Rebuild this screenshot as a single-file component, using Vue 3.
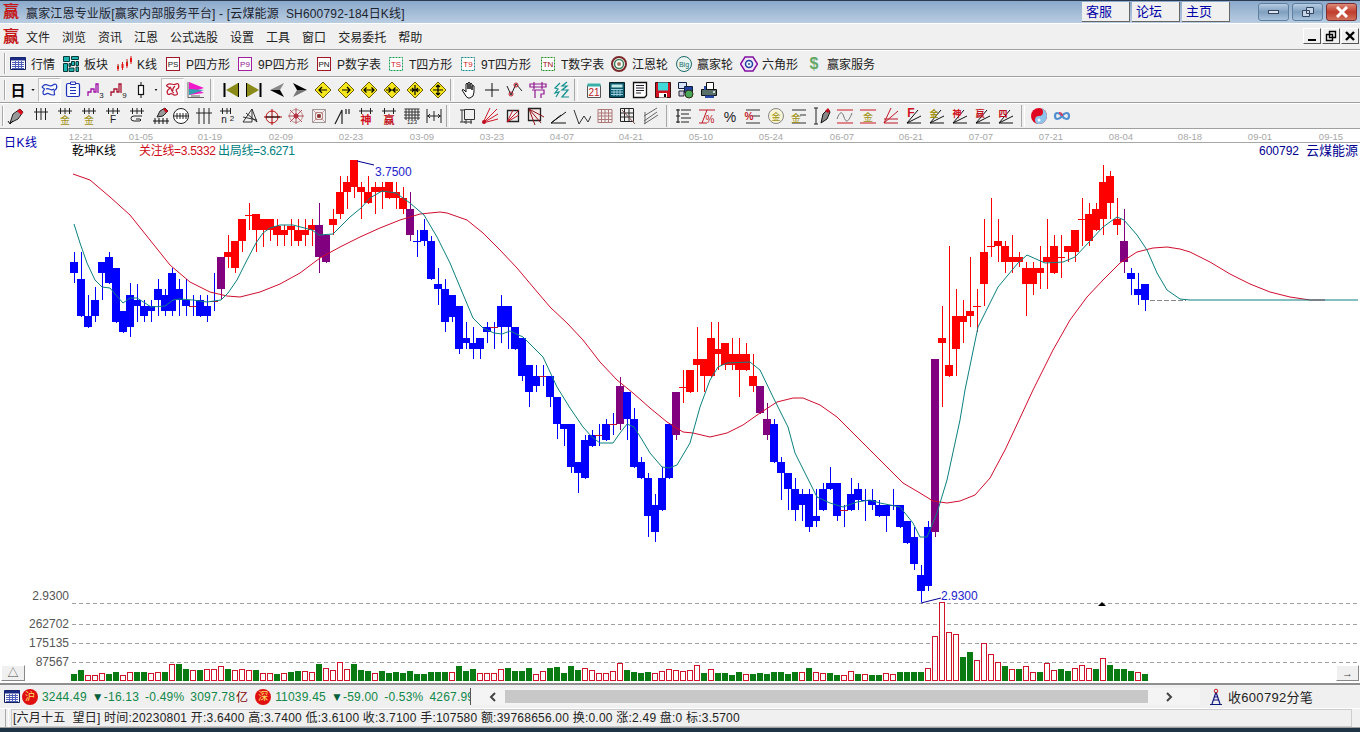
<template>
  <div class="app">
    <!-- 标题栏 -->
    <div class="titlebar">
      <span class="logo">赢</span>
      <span class="title">赢家江恩专业版[赢家内部服务平台] - [云煤能源&nbsp;&nbsp;SH600792-184日K线]</span>
      <div class="links">
        <a v-for="l in links" :key="l" class="link">{{ l }}</a>
      </div>
      <div class="win-btns">
        <div class="win-btn"><i class="min-bar"></i></div>
        <div class="win-btn">
          <svg width="14" height="12" viewBox="0 0 14 12"><path d="M5.5 1.5h7v6h-7zM1.5 4.5h7v6h-7z" fill="#c4d6e8" stroke="#33445c"/></svg>
        </div>
        <div class="win-btn close">
          <svg width="16" height="12" viewBox="0 0 16 12"><path d="M3 1l10 10M13 1L3 11" stroke="#fff" stroke-width="3"/></svg>
        </div>
      </div>
    </div>

    <!-- 菜单 -->
    <div class="menubar">
      <span class="logo">赢</span>
      <span v-for="m in menus" :key="m" class="menu-item">{{ m }}</span>
      <div class="mdi-btns">
        <div class="mdi-btn"><i class="mdi-min"></i></div>
        <div class="mdi-btn">
          <svg width="12" height="12" viewBox="0 0 12 12"><path d="M4.5 1.5h6v6h-6zM1.5 4.5h6v6h-6z" fill="#f0f0f0" stroke="#000" stroke-width="1.4"/></svg>
        </div>
        <div class="mdi-btn">
          <svg width="12" height="12" viewBox="0 0 12 12"><path d="M2 2l8 8M10 2l-8 8" stroke="#000" stroke-width="2.4"/></svg>
        </div>
      </div>
    </div>

    <!-- 工具栏一 -->
    <div class="toolbar tb1">
      <i class="grip"></i>
      <div v-for="t in textTools" :key="t.label" class="text-tool" :style="{ width: t.w + 'px' }">
        <svg class="ico" width="18" height="18" viewBox="0 0 18 18" v-html="icons[t.icon]"></svg>
        <span>{{ t.label }}</span>
      </div>
    </div>

    <!-- 工具栏二 -->
    <div class="toolbar tb2">
      <i class="grip"></i>
      <template v-for="(t, i) in tools2" :key="i">
        <i v-if="t.sep" class="sep" :style="{ marginLeft: (t.ml || 0) + 'px' }"></i>
        <div v-else class="tool" :class="{ pressed: t.on }" :style="{ width: (t.w || 23) + 'px', marginLeft: (t.ml || 0) + 'px' }">
          <svg width="18" height="18" viewBox="0 0 18 18" v-html="icons[t.n]"></svg>
        </div>
      </template>
    </div>

    <!-- 工具栏三 -->
    <div class="toolbar tb3">
      <i class="grip"></i>
      <template v-for="(t, i) in tools3" :key="i">
        <i v-if="t.sep" class="sep" :style="{ marginLeft: (t.ml || 0) + 'px' }"></i>
        <div v-else class="tool" :style="{ width: (t.w || 23) + 'px', marginLeft: (t.ml || 0) + 'px' }">
          <svg width="18" height="18" viewBox="0 0 18 18" v-html="icons[t.n]"></svg>
        </div>
      </template>
    </div>

    <!-- 日期轴 -->
    <svg class="dates" width="1360" height="14" viewBox="0 129 1360 14">
      <text v-for="d in dates" :key="d[0]" :x="d[1]" y="140" text-anchor="middle">{{ d[0] }}</text>
      <line x1="71" x2="1360" y1="142.5" y2="142.5" stroke="#a8a8a8" />
    </svg>

    <!-- K线主图 -->
    <div class="chart">
      <svg width="1360" height="540" viewBox="0 143 1360 540">
        <g class="grid">
          <line v-for="y in [603, 624, 643, 662]" :key="y" x1="72" x2="1360" :y1="y + 0.5" :y2="y + 0.5" />
        </g>
        <g shape-rendering="crispEdges">
          <template v-for="c in candles" :key="c.i">
            <rect :x="c.x" :y="c.wt" width="1" :height="c.wb - c.wt" :fill="c.wc" />
            <rect :x="c.x - 4" :y="c.bt" width="8" :height="c.bh" :fill="c.bc" />
          </template>
          <template v-for="v in volumes" :key="v.i">
            <rect v-if="v.g" :x="v.x" :y="v.y" width="6" :height="681 - v.y" fill="#0a7a12" />
            <rect v-else :x="v.x + 0.5" :y="v.y + 0.5" width="5" :height="680 - v.y" fill="#fff" stroke="#d0142c" />
          </template>
        </g>
        <polyline class="close-line" points="1150,300.5 1186,300.5" />
        <polyline class="red-line" :points="redLine" />
        <polyline class="teal-line" :points="tealLine" />
        <path d="M357 161l17 4M921 603l20-5" fill="none" stroke="#000090" />
        <path d="M1098 606h8l-4-4z" fill="#000" />

        <text class="t black" x="72" y="155">乾坤K线</text>
        <text class="t red tight" x="139" y="155">关注线=3.5332</text>
        <text class="t teal tight" x="218" y="155">出局线=3.6271</text>
        <text class="t navy" x="1259" y="155">600792</text>
        <text class="t navy big" x="1358" y="155" text-anchor="end">云煤能源</text>
        <text class="t price" x="375" y="176">3.7500</text>
        <text class="t price" x="941" y="600">2.9300</text>
        <text v-for="l in axisLabels" :key="l[0]" class="t axis" x="69" :y="l[1]" text-anchor="end">{{ l[0] }}</text>
      </svg>
      <div class="period">日K线</div>
      <div class="corner left">△</div>
      <div class="corner right">→</div>
    </div>

    <!-- 指数条 -->
    <div class="indexbar">
      <div class="index-scroll">
        <svg class="ico first" width="18" height="18" viewBox="0 0 18 18" v-html="icons.table"></svg>
        <span class="badge">沪</span>
        <span class="num n1">3244.49</span>
        <span class="num n2"><b>▼</b>-16.13</span>
        <span class="num n3">-0.49%</span>
        <span class="num n3">3097.78</span><span class="yi">亿</span>
        <span class="badge b2">深</span>
        <span class="num n1">11039.45</span>
        <span class="num n2"><b>▼</b>-59.00</span>
        <span class="num n3">-0.53%</span>
        <span class="num n3">4267.99</span>
      </div>
      <div class="scrollbar">
        <svg width="10" height="12" viewBox="0 0 10 12"><path d="M7 2L3 6l4 4" fill="none" stroke="#444" stroke-width="2"/></svg>
        <i class="thumb"></i>
        <svg class="next" width="10" height="12" viewBox="0 0 10 12"><path d="M3 2l4 4-4 4" fill="none" stroke="#444" stroke-width="2"/></svg>
      </div>
      <div class="tick-cell">
        <svg width="14" height="18" viewBox="0 0 14 18"><path d="M7 4L3 16M7 4l4 12M4 12h6M5 9h4M1 16.500h12" fill="none" stroke="#101880" stroke-width="1.200"/><circle cx="7" cy="3" r="1.800" fill="none" stroke="#c02020"/></svg>
        <span>收600792分笔</span>
      </div>
    </div>

    <!-- 状态栏 -->
    <div class="statusbar">
      <i class="status-grip"></i>
      <div class="status-text">[六月十五&nbsp;&nbsp;望日] 时间:20230801 开:3.6400 高:3.7400 低:3.6100 收:3.7100 手:107580 额:39768656.00 换:0.00 涨:2.49 盘:0 标:3.5700</div>
    </div>
    <div class="taskbar"></div>
  </div>
</template>

<script setup>
const links = ['客服', '论坛', '主页']
const menus = ['文件', '浏览', '资讯', '江恩', '公式选股', '设置', '工具', '窗口', '交易委托', '帮助']

// 小图标里的文字
const FONT = "Liberation Sans,Noto Sans CJK SC,sans-serif"
const txt = (s, x, y, size, fill, extra = '') =>
  `<text x="${x}" y="${y}" font-size="${size}" fill="${fill}" font-family="${FONT}" text-anchor="middle" ${extra}>${s}</text>`
const box = (label, border, color, dash = '') =>
  `<rect x="2.500" y="2.500" width="13" height="13" fill="#fff" stroke="${border}" ${dash}/>` + txt(label, 9, 12, 8, color)
const diamond = (d) =>
  `<path d="M9 1l8 8-8 8-8-8z" fill="#f6e61c" stroke="#6a5c00"/><path d="${d}" fill="none" stroke="#000" stroke-width="1.200"/>`
const comb = (extra = '') => `<path d="M2 5h14M4.500 1v12M9 1v12M13.500 1v12" stroke="#222" fill="none"/>` + extra
const fanLines = '<path d="M2 16h14M2 16L16 9M2 16L13 3" stroke="#111" fill="none"/>'
const fan = (s, c, size = 9) => fanLines + txt(s, 6, 10, size, c, 'font-weight="700"')
const pen = '<path d="M3 16l3-9 7-5 3 3-5 7z" fill="#999" stroke="#222"/><path d="M10 4l3-2 3 3-2 3z" fill="#e01020"/><path d="M1 14l2 3 3-3" fill="none" stroke="#111"/>'

const icons = {
  table: '<path d="M1.500 2.500h15v12h-15z" fill="#fff" stroke="#10205c"/><path d="M1.500 2.500h15v3h-15z" fill="#1c2c84"/><path d="M3 7.500h12M3 9.500h12M3 11.500h12M3 13.500h12M6.500 6v8M9.500 6v8M12.500 6v8" stroke="#5060b8"/>',
  sector: '<path d="M1.500 1.500h6v5h-6zM9.500 1.500h7v3h-7zM9.500 6.500h3v4h-3zM14 6.500h2.500v4H14zM1.500 8.500h4v8h-4zM7 8.500h1.500v3H7zM7 13h5v3.500H7zM14 12h2.500v4.500H14z" fill="#1cb4b0" stroke="#083838"/>',
  kline: '<path d="M3 9v7M7.500 7v8M12 4v9M16 1v8" stroke="#e01818" fill="none"/><path d="M2 11h2v3H2zM6.500 9h2v4h-2zM11 7h2v4h-2zM15 3h2v4h-2z" fill="#e01818"/><path d="M3 11h1M12 7h1" stroke="#208020"/>',
  ps: box('PS', '#a01828', '#222'),
  p9: box('P9', '#a020a0', '#901090'),
  pn: box('PN', '#a01828', '#111'),
  ts: box('TS', '#10a050', '#d01828', 'stroke-dasharray="2 1"'),
  t9: box('T9', '#108888', '#d01828', 'stroke-dasharray="2 1"'),
  tn: box('TN', '#209020', '#a01010', 'stroke-dasharray="2 1"'),
  wheel: '<circle cx="9" cy="9" r="7" fill="#fff" stroke="#7a2828" stroke-width="2"/><circle cx="9" cy="9" r="4.500" fill="#fff" stroke="#3c8060" stroke-width="1.500"/><circle cx="9" cy="9" r="2" fill="#a87858"/>',
  big: '<circle cx="9" cy="9" r="7.500" fill="#e8f4f0" stroke="#206868"/>' + txt('Big', 9, 12, 7, '#206868'),
  hexa: '<path d="M5 2h8l4.500 7L13 16H5L.5 9z" fill="#f4e8f8" stroke="#8010a0" stroke-width="1.500"/><circle cx="9" cy="9" r="3.500" fill="#e8f0ff" stroke="#2040a0" stroke-width="1.500"/><circle cx="9" cy="9" r="1" fill="#307080"/>',
  dollar: txt('$', 9, 14, 16, '#66a868', 'font-weight="700"'),

  day: txt('日', 9, 15, 15, '#000', 'font-weight="700"'),
  caret: '<path d="M6 7h6l-3 4z" fill="#111"/>',
  tangleB: '<path d="M2 5c4-4 6 2 10-1s5 3 2 5 2 5-2 5-4-3-7-1-4-2-2-4-4-2-1-4zM5 8c3-2 5 3 8 0" fill="none" stroke="#2038c0" stroke-width="1.200"/>',
  clip: '<path d="M4 2.500h10q1.500 0 1.500 1.500v10q0 1.500-1.500 1.500H4q-1.500 0-1.500-1.500V4q0-1.500 1.500-1.500z" fill="#f4f8ff" stroke="#2030b8" stroke-width="1.200"/><path d="M6 6.500h6M6 9.500h6M6 12.500h6" stroke="#2030b8"/><path d="M6.500 1h5v2.500h-5z" fill="#fff" stroke="#2030b8"/>',
  wave3: '<path d="M1 15v-4h3V8h3v3h2V3h2v9" fill="none" stroke="#a010a8" stroke-width="1.300"/>' + txt('3', 14.500, 17, 8, '#222'),
  wave9: '<path d="M1 15v-4h3V8h3v3h2V3h2v9" fill="none" stroke="#a81030" stroke-width="1.300"/>' + txt('9', 14.500, 17, 8, '#222'),
  candle: '<path d="M9 1v16" stroke="#111"/><rect x="6.500" y="4.500" width="5" height="9" fill="#fff" stroke="#111" stroke-width="1.200"/>',
  tangleR: '<path d="M3 4c4-3 6 1 9-1s4 4 1 5 3 5-1 6-3-3-6-1-4-3-1-5-4-2-2-4zM6 6c2 2 1 5 4 6M11 5c-2 2-3 3-2 5" fill="none" stroke="#c01830" stroke-width="1.200"/>',
  flag: '<path d="M2 1l15 6-6 2 6 3-15 2z" fill="#f018c8"/><path d="M2 8l15 1-15 5z" fill="#30a0b0"/><path d="M1 1v16M1 16.500h16M4 15h9" stroke="#666" fill="none"/>',
  first: '<path d="M2.500 2v14" stroke="#000" stroke-width="2"/><path d="M4 9l12-7v14z" fill="#8a8a18"/><path d="M16.500 2v14" stroke="#000"/>',
  last: '<path d="M15.500 2v14" stroke="#000" stroke-width="2"/><path d="M14 9L2 2v14z" fill="#8a8a18"/><path d="M1.500 2v14" stroke="#000"/>',
  prev: '<path d="M2 9l14-7-4 7z" fill="#888"/><path d="M2 9l14 7-4-7z" fill="#000"/>',
  next: '<path d="M16 9L2 2l4 7z" fill="#000"/><path d="M16 9L2 16l4-7z" fill="#777"/>',
  dLeft: diamond('M13 9H5M8 6L5 9l3 3'),
  dRight: diamond('M5 9h8M10 6l3 3-3 3'),
  dBoth: diamond('M4 9h10M6.500 6.500L4 9l2.500 2.500M11.500 6.500L14 9l-2.500 2.500'),
  dIn: diamond('M3 9h12M5.500 6.500L8 9l-2.500 2.500M12.500 6.500L10 9l2.500 2.500'),
  dFour: diamond('M4 9h10M9 4v10M6 7l2 2-2 2M12 7l-2 2 2 2'),
  dOut: diamond('M4 9h10M9 4v10M7 6l2-2 2 2M7 12l2 2 2-2'),
  hand: '<path d="M6 9V3q1-1.500 2 0v5V2q1-1.500 2 0v6V3q1-1.500 2 0v6V5q1-1 2 0v6q0 5-4 6H8q-2-1-4-5L2 9q1-1 2 0l2 2z" fill="#fff" stroke="#111"/>',
  cross: '<path d="M9 2v14M2 9h14" stroke="#111" fill="none"/>',
  vee: '<path d="M1 5l4 9 5-11 6 7" fill="none" stroke="#222"/><circle cx="5" cy="13" r="2" fill="none" stroke="#c01828"/><circle cx="10" cy="4" r="2" fill="none" stroke="#c01828"/>',
  jie: '<path d="M1 3h16v3H1zM5 1v7M13 1v7M3 9h12v4h-3v4M6 9v8" fill="none" stroke="#901890" stroke-width="1.200"/>',
  bird: '<path d="M8 2L3 7l3 1-3 4 4-1-3 5M15 1l-5 4h5l-5 4h6l-6 7h7" fill="none" stroke="#109090" stroke-width="1.200"/>',
  cal: '<path d="M2.500 4.500h13v12h-13z" fill="#f8f8f8" stroke="#555"/><path d="M2.500 2.500h13v3h-13z" fill="#38b0a8"/>' + txt('21', 9, 15, 10, '#c01828'),
  calc: '<path d="M1.500 1.500h15v15h-15z" fill="#0c5868" stroke="#072028"/><path d="M3.500 3.500h11v3h-11z" fill="#c0e8e8"/><path d="M3 8.500h12M3 11h12M3 13.500h12M6 8v7M9 8v7M12 8v7" stroke="#9cd"/>',
  note: '<path d="M2.500 1.500h13v13l-2 2h-11z" fill="#fff" stroke="#111" stroke-width="1.300"/><path d="M5 4.500h8M5 7h8M5 9.500h8M5 12h5" stroke="#223"/>',
  disk: '<path d="M1.500 1.500h15v15h-15z" fill="#d01020" stroke="#401010"/><path d="M4 1.500h10v8H4z" fill="#40d8d8"/><path d="M5 12h8v4.500H5z" fill="#fff"/><path d="M10 13h2v3h-2z" fill="#000"/>',
  network: '<path d="M1.500 1.500h8v6h-8z" fill="#d8e4f8" stroke="#102040"/><path d="M7.500 5.500h8v6h-8z" fill="#2040a0" stroke="#102040"/><circle cx="12" cy="13" r="4" fill="#48a858" stroke="#302818"/><path d="M2 10h5v5H2z" fill="#ccd" stroke="#223"/>',
  printer: '<path d="M6.500 1.500h7v7h-7z" fill="#fff" stroke="#111"/><path d="M1.500 8.500h15v6h-15z" fill="#587068" stroke="#111"/><path d="M4 5h2v4H4zM5 14.500h9v2.500H5z" fill="#2848a8"/><circle cx="14" cy="11" r="1" fill="#fff"/>',

  pen,
  comb: comb(),
  combGold: '<path d="M2 4h14M4.500 1v6M9 1v6M13.500 1v6" stroke="#222" fill="none"/>' + txt('金', 9, 17, 10, '#a09010'),
  combF: '<path d="M2 4h14M4.500 1v6M9 1v6M13.500 1v6" stroke="#222" fill="none"/>' + txt('F', 9, 16, 10, '#222'),
  combSwirl: '<path d="M2 4h14M4.500 1v6M9 1v6M13.500 1v6M14 9H6q-3 0-3 2.500T6 14h6q2-1 0-2H8" stroke="#222" fill="none"/>',
  penComb: '<path d="M5 10l3-6 5-3 3 3-5 5z" fill="#999" stroke="#222"/><path d="M11 2l2-1 3 3-2 2z" fill="#d01020"/><path d="M1 14h16M3 11v6M7 11v6M11 11v6M15 11v6" stroke="#111" fill="none"/>',
  ringComb: '<circle cx="9" cy="9" r="7.500" fill="#fff" stroke="#222"/><path d="M2 9h14M5 6v6M8 6v6M11 6v6M14 6v6" stroke="#222"/>',
  comb2: '<path d="M1 6h16M4 1v16M9 1v16M14 1v16" stroke="#222" fill="none"/>',
  combN: '<path d="M2 4h11M4.500 1v6M9 1v6M12.500 1v6" stroke="#222" fill="none"/>' + txt('n', 6, 16, 10, '#222') + txt('2', 14, 14, 8, '#222'),
  tri: '<path d="M2 15l9-13v13zM11 2l5 13M2 10l14 3M5 6l11 9" fill="none" stroke="#333"/>',
  target: '<circle cx="8" cy="10" r="6" fill="none" stroke="#c01010"/><path d="M0 10h18M8 2v16" stroke="#a00"/><path d="M2 10h14" stroke="#111"/>',
  star: '<circle cx="9" cy="9" r="6.500" fill="none" stroke="#c09090"/><path d="M1 9h16M9 1v16M3 3l12 12M15 3L3 15" stroke="#b85060"/><circle cx="9" cy="9" r="2.500" fill="#b03040"/>',
  square: '<path d="M2.500 2.500h13v13h-13z" fill="#f4eeee" stroke="#999"/><path d="M5.500 5.500h7v7h-7z" fill="none" stroke="#b88"/><path d="M2 2l14 14M16 2L2 16" stroke="#c8a0a0"/><circle cx="9" cy="9" r="2" fill="#883030"/>',
  ticks: '<path d="M1 17L8 3v14M8 3v0M12 2v5M15 2v5" fill="none" stroke="#222" stroke-width="1.200"/>',
  combShen: '<path d="M2 4h14M4.500 1v6M13.500 1v6" stroke="#222" fill="none"/>' + txt('神', 9, 17, 11, '#d01020', 'font-weight="700"'),
  combYing: '<path d="M2 4h14M4.500 1v6M13.500 1v6" stroke="#222" fill="none"/>' + txt('赢', 9, 17, 11, '#c01020', 'font-weight="700"'),
  combNum: '<path d="M1.500 2h15M3 2v14M6 2v14M9 2v14M12 2v14M15 2v14M1 5h16M1 8h16M1 11h16" stroke="#333" fill="none"/><path d="M2 13h14v4H2z" fill="#f0f0f0"/>' + txt('123', 9, 17, 6, '#222'),
  width: '<path d="M2 2v14M16 2v14M9 4v10M2 9h14M5 7L3 9l2 2M13 7l2 2-2 2" fill="none" stroke="#222"/>',

  boxT: '<path d="M2 3h5M2 15h5M4 3v12M6.500 2.500h10v10h-10zM6 15h8M8 12v5M13 12v5" fill="none" stroke="#333"/>',
  fanR: '<path d="M2 16L17 7M2 16L16 2M2 16L9 1M2 16L17 12" stroke="#d01828" fill="none"/><circle cx="3" cy="15" r="2" fill="#c01020"/>',
  fanBox: '<path d="M3.500 3.500h11v11h-11z" fill="none" stroke="#222" stroke-width="1.300"/><path d="M3 15L15 8M3 15L9 3M3 15L15 3" stroke="#c01828" fill="none"/>',
  fanBoxR: '<path d="M1.500 1.500h12v12h-12z" fill="#f6e8e8" stroke="#222" stroke-width="1.300"/><path d="M2 2l15 8M2 2l12 14M2 2l6 16" stroke="#901018" fill="none"/>',
  angle: '<path d="M1 16h15M1 16L16 5M1 16L11 8" stroke="#111" fill="none"/>',
  zig: '<path d="M1 3l5 14 5-8 4 6 3-6" stroke="#333" fill="none"/>',
  gridR: '<path d="M2 2.500h14v13H2zM2 6h14M2 9h14M2 12.500h14M5.500 2v14M9 2v14M12.500 2v14" stroke="#b07878" fill="none"/>',
  gridB: '<path d="M1.500 1.500h13v13h-13zM1 6h14M1 10h14M5.500 1v14M10 1v14" stroke="#222" fill="none"/><path d="M3 3l13 14" stroke="#805050"/>',
  slash: '<path d="M2 14l13-9M2 9l13-8M2 17l14-9M3 5v12" stroke="#666" fill="none"/>',
  list: '<path d="M3 2v14M6 3h10M6 7h8M6 11h10M6 15h8M1 3h4M1 9h4M1 15h4" stroke="#222" stroke-width="1.200" fill="none"/>',
  pctLine: '<path d="M1 3h16M1 16h8M4 16L9 3" stroke="#c01828" fill="none"/>' + txt('%', 12, 16, 10, '#c01828'),
  pct: txt('%', 9, 15, 14, '#222'),
  pctLines: '<path d="M2 3h14M8 9h8M2 16h14" stroke="#333" fill="none"/>' + txt('%', 5, 13, 10, '#c01828', 'font-weight="700"'),
  coin: '<circle cx="9" cy="9" r="7.500" fill="#f8f4d8" stroke="#888"/>' + txt('金', 9, 13, 9, '#a09010'),
  goldLines: '<path d="M2 3h14M10 8h6M2 16h14" stroke="#333" fill="none"/>' + txt('金', 6, 15, 10, '#a09010'),
  penBar: '<path d="M3 1v16M1 1h4M1 17h4" stroke="#222" fill="none"/><path d="M8 16l2-9 5-5 2 3-3 7z" fill="#888" stroke="#111"/><path d="M12 4l3-3 2 3-2 2z" fill="#c01020"/>',
  sineBar: '<path d="M1 3h16M1 16h16" stroke="#d01828" fill="none"/><path d="M1 12c3-8 5-8 7-2s4 6 8-4" stroke="#777" fill="none"/>',
  goldBar: '<path d="M1 3h16M1 16h16" stroke="#d01828" fill="none"/>' + txt('金', 9, 14, 10, '#a09010'),
  angles: '<path d="M2 16h14M2 12h14M2 16L16 4M2 16L9 1" stroke="#c01828" fill="none"/>',
  fanF: fan('F', '#d01020', 12),
  fanGold: fan('金', '#a09010'),
  fanShen: fan('神', '#d01020'),
  fanYing: fan('赢', '#c01020'),
  fanFour: fan('四', '#c01020'),
  taiji: '<circle cx="9" cy="9" r="8" fill="#e00820"/><path d="M9 1a8 8 0 0 1 0 16 4 4 0 0 1 0-8 4 4 0 0 0 0-8z" fill="#8cc4ec"/><circle cx="9" cy="5" r="1.500" fill="#e00820"/><circle cx="9" cy="13" r="1.500" fill="#fff"/>',
  infinity: '<path d="M9 9c-3-4-7-4-7 0s4 4 7 0 7-4 7 0-4 4-7 0z" fill="none" stroke="#5090d0" stroke-width="2.200"/><path d="M6 6c2 0 3 1.500 3 3" fill="none" stroke="#d04060" stroke-width="2"/>'
}

const textTools = [
  { icon: 'table', label: '行情', w: 53 }, { icon: 'sector', label: '板块', w: 53 },
  { icon: 'kline', label: 'K线', w: 49 }, { icon: 'ps', label: 'P四方形', w: 72 },
  { icon: 'p9', label: '9P四方形', w: 79 }, { icon: 'pn', label: 'P数字表', w: 72 },
  { icon: 'ts', label: 'T四方形', w: 72 }, { icon: 't9', label: '9T四方形', w: 80 },
  { icon: 'tn', label: 'T数字表', w: 71 }, { icon: 'wheel', label: '江恩轮', w: 65 },
  { icon: 'big', label: '赢家轮', w: 65 }, { icon: 'hexa', label: '六角形', w: 65 },
  { icon: 'dollar', label: '赢家服务', w: 80 }
]

const row = (names) => names.map((n) => ({ n }))
const tools2 = [
  { n: 'day', w: 20 }, { n: 'caret', w: 10 },
  { n: 'tangleB', on: true }, ...row(['clip', 'wave3', 'wave9']),
  { n: 'candle', w: 22 }, { n: 'caret', w: 8 },
  { n: 'tangleR', on: true, ml: 1 }, { n: 'flag' },
  { sep: true, ml: 3 },
  { n: 'first', ml: 3 }, ...row(['last', 'prev', 'next', 'dLeft', 'dRight', 'dBoth', 'dIn', 'dFour', 'dOut']),
  { sep: true, ml: 1 },
  { n: 'hand', ml: 1 }, ...row(['cross', 'vee', 'jie', 'bird']),
  { sep: true, ml: 2 },
  { n: 'cal', ml: 2 }, ...row(['calc', 'note', 'disk', 'network', 'printer'])
]
const tools3 = [
  { n: 'pen', w: 24 }, { n: 'comb', w: 25 }, { n: 'combGold', w: 24 }, { n: 'combGold', w: 24 },
  { n: 'combF', w: 24 }, { n: 'combSwirl', w: 24 }, { n: 'penComb', w: 23 },
  { n: 'ringComb', ml: -3 }, ...row(['comb2', 'combN', 'tri', 'target', 'star', 'square']),
  { n: 'ticks', ml: 1 }, ...row(['combShen', 'combYing', 'combNum']), { n: 'width', ml: -1 },
  { sep: true, ml: 1 },
  { n: 'boxT', ml: 3 }, ...row(['fanR', 'fanBox', 'fanBoxR', 'angle', 'zig', 'gridR', 'gridB', 'slash']),
  { sep: true, ml: 4 },
  ...row(['list', 'pctLine', 'pct', 'pctLines', 'coin', 'goldLines', 'penBar', 'sineBar', 'goldBar', 'angles', 'fanF', 'fanGold', 'fanShen', 'fanYing', 'fanFour']),
  { sep: true, ml: 4 },
  ...row(['taiji', 'infinity'])
]

const dates = [
  ['12-21', 81], ['01-05', 141], ['01-19', 210], ['02-09', 281], ['02-23', 351], ['03-09', 422], ['03-23', 492],
  ['04-07', 562], ['04-21', 631], ['05-10', 701], ['05-24', 771], ['06-07', 842], ['06-21', 911], ['07-07', 981],
  ['07-21', 1051], ['08-04', 1121], ['08-18', 1190], ['09-01', 1260], ['09-15', 1331]
]
const axisLabels = [['2.9300', 600], ['262702', 628], ['175135', 647], ['87567', 666]]

// K线数据: [类型, 实体上, 实体下, 影线上, 影线下]，按截图 3 倍坐标记录
const R = 'r', B = 'b', P = 'p', D = 'd'
const seg = (base, rows) => rows.map((r) => [r[0], ...r.slice(1).map((v) => Math.round(base + v / 3))])
const raw = [
  ...seg(130, [
    [B,396,428,366,460],[B,447,557,366,557],[B,557,590,495,590],[B,510,557,470,575],[B,396,428,396,510],
    [B,380,460,366,460],[B,414,575,414,575],[B,543,605,543,605],[B,495,590,460,622],[B,510,527,462,575],
    [B,527,557,510,575],[B,527,543,510,575],[B,478,510,447,557],[B,495,543,478,557],[B,430,543,414,557],
    [B,478,510,447,557],[B,510,527,447,557],[D,527,527,495,557],[B,510,557,495,557],[B,527,557,495,575],
    [D,512,512,430,543],[P,380,476,380,510],[R,366,380,315,414],[R,333,414,333,428],[R,267,333,267,366],
    [R,254,254,220,300],[R,252,300,252,366],[R,267,300,267,350],[R,267,300,267,333],[R,287,315,267,348],
    [R,300,315,284,348],[R,287,300,267,348],[R,300,333,267,348],[R,300,315,267,348],[R,285,300,267,348],
    [P,285,380,220,428],[P,315,396,315,396],[R,267,285,237,315],[R,186,252,138,267],[R,156,186,138,236],
    [R,90,172,90,204],[R,172,186,156,267],[R,186,219,138,219],[R,172,186,156,252],[R,172,186,156,236],
    [R,156,204,156,204],[R,186,204,156,236],[R,204,236,172,252],[P,237,315,186,333]
  ]),
  ...seg(200, [
    [B,124,124,90,170],[B,90,124,57,137],[B,124,237,107,237],[B,252,267,205,316],[B,267,366,237,396],
    [B,285,350,285,366],[B,318,447,318,462],[B,414,430,366,447],[B,430,447,380,476],[B,414,447,414,476],
    [B,382,396,366,430],[D,381,381,366,447],[B,318,381,285,430],[B,318,381,318,447],[B,382,447,382,447],
    [B,414,527,414,543],[B,495,575,495,622],[B,527,557,495,575],[D,527,527,495,557],[B,527,590,527,622],
    [B,590,672,590,718],[B,672,688,672,738],[B,672,800,672,818],[B,786,818,786,880],[B,720,833,705,833],
    [B,705,737,690,737],[D,705,705,672,738],[B,672,719,657,719],[D,672,672,640,705],[P,557,672,530,690],
    [B,576,656,576,720],[B,657,800,625,800],[B,786,833,770,833],[B,833,947,820,1010],[B,915,995,882,1027]
  ]),
  ...seg(310, [
    [B,504,600,472,600],[B,342,503,342,503],[P,246,375,246,390],[R,230,230,180,278],[R,180,245,180,245],
    [R,148,165,52,245],[R,148,197,148,245],[R,84,197,36,197],[R,116,132,36,180],[R,100,165,100,180],
    [R,132,165,85,180],[R,132,180,85,260],[R,132,180,100,180],[R,197,228,132,245],[P,228,308,228,308],
    [P,326,375,280,390],[B,342,456,326,456],[B,456,489,440,570],[B,489,537,489,600],[B,537,600,504,632],
    [B,553,585,537,632],[B,553,650,537,665],[B,618,632,537,650],[B,537,600,518,600],[B,519,537,472,537],
    [B,520,618,520,632],[D,600,600,585,650],[B,553,600,504,600],[B,537,570,520,600],[B,570,570,537,632],
    [B,570,585,537,600],[B,585,618,570,618],[B,585,618,585,665],[B,585,585,537,600],[B,585,650,585,650],
    [B,634,698,634,698],[B,682,762,650,780],[B,795,843,765,875],[B,650,827,632,843],[P,147,665,147,680]
  ]),
  ...seg(150, [
    [R,564,578,468,770],[R,645,677,288,677],[R,498,596,418,677],[R,498,515,450,578],[R,483,498,322,530],
    [R,468,468,418,545],[R,306,402,208,468],[R,288,288,144,320],[R,273,288,208,336],[R,288,336,273,368],
    [R,320,336,255,368],[R,320,336,306,352],[R,354,402,336,497],[R,354,402,336,434],[R,354,369,288,416],
    [R,321,337,208,416],[R,288,368,255,368],[R,322,322,255,385],[R,288,305,288,336],[R,240,305,240,336],
    [R,208,208,145,288],[R,192,272,160,288],[R,177,240,160,240],[R,96,208,45,255],[R,78,158,63,208],
    [R,208,225,145,255],[P,273,336,178,368],[B,369,386,354,434],[B,418,434,369,466],[B,402,450,402,482]
  ])
]
const COLORS = { r: '#ff0000', b: '#0000ff', p: '#800080', d: '#0000ff' }
const candles = raw.map((c, i) => ({
  i,
  x: 74 + 7 * i,
  bt: c[1],
  bh: Math.max(c[2] - c[1], 1),
  wt: c[3],
  wb: Math.max(c[4], c[2] + 1),
  wc: COLORS[c[0]],
  bc: c[0] === 'd' ? '#c01030' : COLORS[c[0]]
}))

// 成交量: 负数为阳量(红框)，正数为阴量(绿柱)，同样按 3 倍坐标
const vol = (base, list) => list.map((v) => ({ g: v > 0, y: Math.round(base + Math.abs(v) / 3) }))
const volumes = [
  ...vol(590, [252,240,-256,-256,-250,252,247,-256,-247,247,247,-250,-247,247,-222,222,237,-240,240,-237,-237,-229,237,-240,-237,-240,240,-250,-250,252,-250,247,243,-243,-247,222,-235,-240,-217,-237,222,240,243,-250,243,250,247,250,243,252,252,247,247,247,-247,228,243,237,-250,-250]),
  ...vol(650, [-70,-57,54,63,63,54,-72,-62,54,51,69,48,60,-54,-60,-69,-69,-63,-39,60,66,69,66,-69,-63,-57,-60,-63,-60,-45,69,-57,69,69,75,66,-72,72,69,72,66,66,72,66,-66,54,-66,-69,69,75,-75,-63,72]),
  ...vol(590, [-253,256,256,-250,-253,247,247,247,247,-235,-139,-37,-127,-133,202,186,-211,-160,-193,-217,228,-238,237,-229,-247,247,-219,-241,237,243,-235,-226,-235,237,-205,226,237,237,243,-247,253])
].map((v, i) => ({ ...v, i, x: 71 + 7 * i }))

const redLine = '73,174 90,180 110,197 130,215 150,240 170,265 190,282 210,292 227,296 240,297 260,292 280,284 300,273 320,258 340,247 360,237 380,228 400,220 420,214 440,212 447,213 467,220 483,233 500,250 517,268 533,287 550,307 567,323 583,340 600,362 617,380 633,393 650,408 667,422 683,432 693,433 710,437 727,433 743,425 760,413 777,402 793,398 803,398 820,405 837,417 853,433 870,450 887,467 903,483 920,493 933,501 947,503 960,501 975,495 990,478 1005,450 1020,418 1033,390 1053,350 1070,320 1087,297 1103,280 1120,263 1137,252 1153,248 1167,247 1180,249 1190,252 1210,262 1230,274 1250,284 1270,292 1290,297 1310,300 1325,300'
const tealLine = '74,224 80,243 87,263 95,280 102,287 110,288 116,295 123,303 130,298 137,298 145,303 151,307 165,306 173,300 179,299 193,300 207,302 214,301 221,300 228,293 237,280 247,260 256,243 263,233 270,228 280,225 293,225 312,230 319,235 333,234 340,227 350,217 361,208 370,198 382,191 396,193 410,203 424,215 437,237 450,263 460,287 473,318 483,328 494,333 502,334 510,331 523,337 543,357 557,387 570,408 583,427 592,437 600,443 613,443 620,433 627,424 634,427 641,438 650,453 662,467 669,468 677,465 690,443 700,407 710,380 718,367 727,363 750,362 760,370 773,397 788,427 795,453 817,497 830,503 843,507 857,502 870,500 880,503 900,507 913,523 920,537 927,537 937,513 947,480 960,420 965,390 978,327 998,287 1018,263 1027,255 1045,263 1063,262 1075,257 1090,241 1103,227 1117,217 1124,220 1137,235 1147,250 1157,273 1167,290 1180,299 1190,300 1358,300'
</script>

<style scoped>
.app {
  width: 1360px;
  height: 732px;
  overflow: hidden;
  background: #f0f0f0;
  font-family: "Liberation Sans", "Noto Sans CJK SC", sans-serif;
  font-size: 12px;
  color: #222;
  display: flex;
  flex-direction: column;
}

.titlebar {
  height: 23px;
  flex: none;
  box-sizing: border-box;
  display: flex;
  align-items: center;
  padding-left: 3px;
  border-top: 1px solid #2a3a50;
  background: linear-gradient(#8ba9cb, #b9cde1);
  color: #1c2430;
}
.logo {
  width: 23px;
  font-size: 16px;
  font-weight: 700;
  color: #c41818;
  line-height: 16px;
  flex: none;
}
.title {
  white-space: pre;
  letter-spacing: 0.17px;
}
.links {
  margin-left: auto;
  display: flex;
  gap: 2px;
  height: 20px;
  margin-top: -1px;
}
.link {
  width: 48px;
  box-sizing: border-box;
  padding-left: 4px;
  font-size: 13px;
  line-height: 19px;
  color: #0000a8;
  background: #f0f0f0;
  border-right: 1px solid #666;
  border-bottom: 1px solid #666;
}
.win-btns {
  display: flex;
  gap: 3px;
  margin: -1px 3px 0 28px;
}
.win-btn {
  width: 31px;
  height: 18px;
  box-sizing: border-box;
  border: 1px solid #5f7f9f;
  border-radius: 3px;
  background: linear-gradient(#b6cce2, #7f9fbf 50%, #a9c3dc);
  display: flex;
  align-items: center;
  justify-content: center;
}
.win-btn.close {
  border-color: #7a3030;
  background: linear-gradient(#dc8a78, #c03c2c 50%, #d0705c);
}
.min-bar {
  width: 11px;
  height: 4px;
  background: #dbe6f0;
  border: 1px solid #33445c;
  box-sizing: border-box;
}

.menubar {
  height: 27px;
  flex: none;
  box-sizing: border-box;
  display: flex;
  align-items: center;
  padding-left: 3px;
  border-top: 1px solid #fff;
  border-bottom: 1px solid #a0a0a0;
}
.menu-item {
  margin-right: 12px;
  white-space: nowrap;
}
.mdi-btns {
  margin: -1px 1px 0 auto;
  display: flex;
  gap: 1px;
}
.mdi-btn {
  width: 18px;
  height: 16px;
  box-sizing: border-box;
  border-right: 1px solid #555;
  border-bottom: 1px solid #555;
  border-top: 1px solid #fff;
  border-left: 1px solid #fff;
  display: flex;
  align-items: center;
  justify-content: center;
}
.mdi-min {
  width: 8px;
  height: 2px;
  background: #000;
  margin-top: 8px;
}

.toolbar {
  flex: none;
  box-sizing: border-box;
  display: flex;
  align-items: center;
  position: relative;
  border-top: 1px solid #fff;
  border-bottom: 1px solid #a0a0a0;
}
.tb1 { height: 27px; padding-left: 9px; }
.tb2 { height: 26px; padding-left: 8px; }
.tb3 { height: 26px; padding-left: 4px; }
.grip {
  position: absolute;
  left: 4px;
  top: 2px;
  bottom: 2px;
  width: 1px;
  background: #a8a8a8;
  box-shadow: 1px 0 0 #fff;
}
.tb3 .grip { left: 2px; }
.text-tool {
  display: flex;
  align-items: center;
  gap: 4px;
  white-space: nowrap;
  flex: none;
  font-size: 12px;
}
.tool {
  height: 24px;
  box-sizing: border-box;
  flex: none;
  display: flex;
  align-items: center;
  justify-content: center;
}
.tool.pressed {
  border: 1px solid #c0c0c0;
  border-right-color: #fff;
  border-bottom-color: #fff;
  background: #f8f8f8;
}
.sep {
  width: 2px;
  height: 22px;
  flex: none;
  margin-right: 2px;
  border-left: 1px solid #a8a8a8;
  border-right: 1px solid #fff;
  box-sizing: border-box;
  display: block;
  padding: 0 1px;
}

.dates {
  flex: none;
  display: block;
  background: #fff;
}
.dates text {
  font-size: 9.5px;
  fill: #a8a8a8;
  font-family: "Liberation Sans", sans-serif;
}

.chart {
  flex: none;
  height: 540px;
  position: relative;
  background: #fff;
}
.chart svg {
  display: block;
}
.grid line {
  stroke: #a0a0a0;
  stroke-dasharray: 4 3;
}
.red-line,
.teal-line,
.close-line {
  fill: none;
}
.red-line { stroke: #d00c2c; }
.teal-line { stroke: #0b8080; }
.close-line { stroke: #888; stroke-dasharray: 5 2; }
.t {
  font-size: 12px;
  font-family: "Liberation Sans", "Noto Sans CJK SC", sans-serif;
}
.tight { letter-spacing: -0.3px; }
.black { fill: #000; }
.red { fill: #d01020; }
.teal { fill: #008080; }
.navy { fill: #000090; }
.big { font-size: 13px; }
.price { fill: #2222cc; }
.axis { fill: #555; }
.period {
  position: absolute;
  left: 4px;
  top: -8px;
  line-height: 16px;
  font-size: 12px;
  letter-spacing: 0.5px;
  color: #0000b0;
}
.corner {
  position: absolute;
  bottom: 2px;
  height: 16px;
  box-sizing: border-box;
  text-align: center;
  font-size: 11px;
  line-height: 15px;
  color: #444;
  background: #f0f0f0;
  border: 1px solid #fff;
  border-right-color: #888;
  border-bottom-color: #888;
}
.corner.left { left: 1px; width: 24px; }
.corner.right { right: 1px; width: 23px; }

.indexbar {
  height: 25px;
  flex: none;
  box-sizing: border-box;
  border-top: 2px solid #8f8f8f;
  display: flex;
  align-items: center;
}
.index-scroll {
  width: 470px;
  flex: none;
  overflow: hidden;
  white-space: nowrap;
  display: flex;
  align-items: center;
  padding-left: 3px;
  box-sizing: border-box;
}
.ico.first { flex: none; }
.badge {
  width: 16px;
  height: 16px;
  flex: none;
  margin-left: 1px;
  border-radius: 50%;
  background: #e01010;
  color: #ffe060;
  font-size: 10px;
  line-height: 16px;
  text-align: center;
}
.b2 { margin-left: 7px; }
.num {
  color: #12884a;
  flex: none;
  letter-spacing: 0.2px;
}
.num b {
  color: #04603a;
  font-weight: 400;
}
.n1 { margin-left: 4px; }
.n2 { margin-left: 5px; }
.n3 { margin-left: 6px; }
.yi {
  color: #800000;
  flex: none;
  margin-left: 1px;
}
.scrollbar {
  width: 730px;
  height: 17px;
  flex: none;
  box-sizing: border-box;
  border-left: 1px solid #555;
  display: flex;
  align-items: center;
  padding-left: 17px;
  background: #f4f4f4;
}
.thumb {
  width: 643px;
  height: 13px;
  margin-left: 7px;
  background: #c8c8c8;
}
.next { margin-left: 16px; }
.tick-cell {
  margin-left: 9px;
  display: flex;
  align-items: center;
  gap: 5px;
  font-size: 13px;
  letter-spacing: 0.3px;
}

.statusbar {
  height: 20px;
  flex: none;
  box-sizing: border-box;
  display: flex;
  align-items: center;
  padding-left: 5px;
  border-top: 1px solid #fff;
  border-bottom: 1px solid #a0a0a0;
}
.status-grip {
  width: 2px;
  height: 18px;
  border-left: 1px solid #a8a8a8;
  border-right: 1px solid #fff;
  flex: none;
}
.status-text {
  margin-left: 2px;
  width: 1341px;
  height: 18px;
  box-sizing: border-box;
  padding-left: 1px;
  border: 1px solid #ccc;
  line-height: 16px;
  white-space: pre;
  letter-spacing: 0.22px;
}
.taskbar {
  flex: 1;
  background: #1f3444;
}
</style>
